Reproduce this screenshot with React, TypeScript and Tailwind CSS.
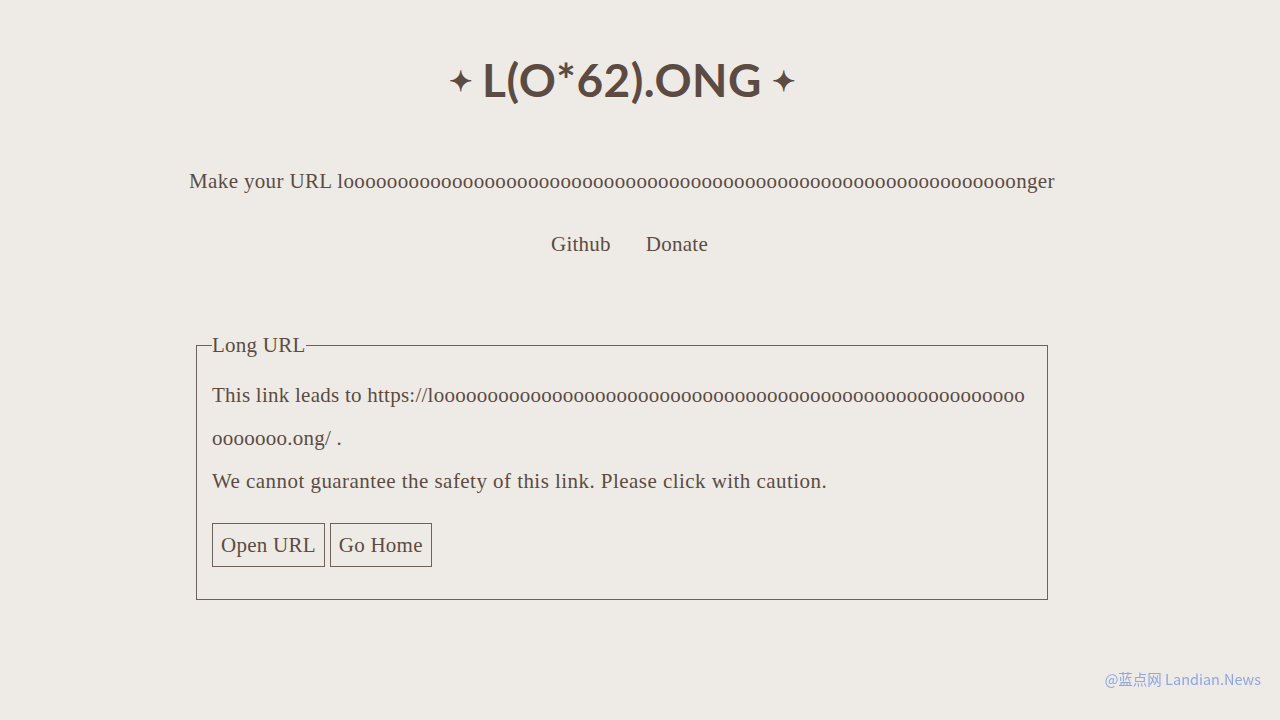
const serif = { fontFamily: '"Liberation Serif", "DejaVu Serif", serif' };

export default function App() {
  const longO = 'o'.repeat(62);
  return (
    <div className="min-h-[720px] w-full bg-[#eeebe6] text-[#5b4b43]" style={serif}>
      <div className="w-[1244px] flex flex-col items-center pt-[52px]">
        <h1
          className="flex items-center gap-[10px] text-[46px] font-bold leading-[56px] tracking-[0.5px]"
          style={{ fontFamily: 'Lato, "Open Sans", sans-serif' }}
        >
          <span className="text-[28px]">✦</span>
          <span>L(O*62).ONG</span>
          <span className="text-[28px]">✦</span>
        </h1>
        <p className="mt-[57px] text-[21px] leading-[32px] tracking-[0.35px]">Make your URL l{longO}nger</p>
        <nav className="mt-[31px] flex gap-[35px] pl-[15px] text-[21px] leading-[32px] tracking-[0.25px]">
          <a href="#">Github</a>
          <a href="#">Donate</a>
        </nav>
        <fieldset className="mt-[73px] w-[852px] border border-[#6e615a] px-[15px] pb-[32px] text-[21px] tracking-[0.25px]">
          <legend className="px-0 leading-[24px]">Long URL</legend>
          <p className="mt-[17px] break-all leading-[43px]">
            This link leads to https://l{longO}.ong/ .
          </p>
          <p className="leading-[43px] tracking-[0.45px]">
            We cannot guarantee the safety of this link. Please click with caution.
          </p>
          <div className="mt-[20px] flex gap-[5px]">
            <button className="h-[44px] border border-[#6e615a] px-[8px] leading-[42px] tracking-[0.25px]">Open URL</button>
            <button className="h-[44px] border border-[#6e615a] px-[8px] leading-[42px] tracking-[0.25px]">Go Home</button>
          </div>
        </fieldset>
      </div>
      <div
        className="fixed bottom-[30px] right-[19px] text-[14.5px] text-[#8ea6e6]"
        style={{ fontFamily: '"Noto Sans CJK SC", "Noto Sans", sans-serif' }}
      >
        @蓝点网 Landian.News
      </div>
    </div>
  );
}
